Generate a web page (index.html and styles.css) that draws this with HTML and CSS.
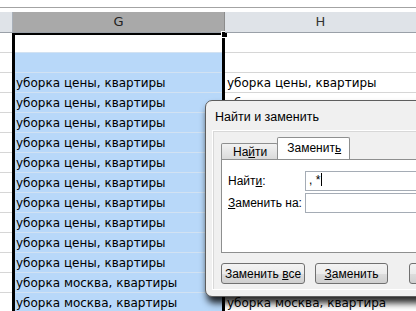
FILE: index.html
```html
<!DOCTYPE html>
<html lang="ru">
<head>
    <meta charset="UTF-8">
    <title>Найти и заменить</title>
    <link rel="stylesheet" href="styles.css">
</head>
<body>

<div class="toolbar"></div>

<div class="sheet">
    <!-- column F, only a sliver is visible -->
    <div class="col col-f">
        <div class="hdr"></div>
        <div class="cell"></div><div class="cell"></div><div class="cell"></div><div class="cell"></div>
        <div class="cell"></div><div class="cell"></div><div class="cell"></div><div class="cell"></div>
        <div class="cell"></div><div class="cell"></div><div class="cell"></div><div class="cell"></div>
        <div class="cell"></div><div class="cell"></div>
    </div>

    <!-- column G, selected -->
    <div class="col col-g">
        <div class="hdr">G</div>
        <div class="sel">
            <div class="cell active"></div>
            <div class="cell"></div>
            <div class="cell">уборка цены, квартиры</div>
            <div class="cell">уборка цены, квартиры</div>
            <div class="cell">уборка цены, квартиры</div>
            <div class="cell">уборка цены, квартиры</div>
            <div class="cell">уборка цены, квартиры</div>
            <div class="cell">уборка цены, квартиры</div>
            <div class="cell">уборка цены, квартиры</div>
            <div class="cell">уборка цены, квартиры</div>
            <div class="cell">уборка цены, квартиры</div>
            <div class="cell">уборка цены, квартиры</div>
            <div class="cell">уборка москва, квартиры</div>
            <div class="cell">уборка москва, квартиры</div>
        </div>
        <div class="handle"></div>
    </div>

    <!-- column H (rows under the dialog left blank) -->
    <div class="col col-h">
        <div class="hdr">H</div>
        <div class="cell"></div>
        <div class="cell"></div>
        <div class="cell">уборка цены, квартиры</div>
        <div class="cell">уборка цены, квартиры</div>
        <div class="cell"></div>
        <div class="cell"></div>
        <div class="cell"></div>
        <div class="cell"></div>
        <div class="cell"></div>
        <div class="cell"></div>
        <div class="cell"></div>
        <div class="cell"></div>
        <div class="cell"></div>
        <div class="cell">уборка москва, квартира</div>
    </div>
</div>

<!-- Find & replace dialog -->
<div class="dialog">
    <div class="title">Найти и заменить</div>
    <div class="client">
        <div class="tabs">
            <div class="tab">На<u>й</u>ти</div>
            <div class="tab current">Заменит<u>ь</u></div>
        </div>
        <div class="page">
            <div class="field">
                <label>Найт<u>и</u>:</label>
                <div class="input">, *<span class="caret"></span></div>
            </div>
            <div class="field">
                <label><u>З</u>аменить на:</label>
                <div class="input"></div>
            </div>
        </div>
        <div class="buttons">
            <button class="btn wide">Заменить <u>в</u>се</button>
            <button class="btn"><u>З</u>аменить</button>
            <button class="btn">Найти все</button>
        </div>
    </div>
</div>

</body>
</html>
```

FILE: styles.css
```css
body {
    margin: 0;
    width: 416px;
    height: 311px;
    overflow: hidden;
    position: relative;
    background: #fff;
    font-family: "DejaVu Sans", Verdana, sans-serif;
}
.toolbar {
    height: 12px;
    box-sizing: border-box;
    border-top: 7px solid #fff;
    border-bottom: 4px solid #fff;
    background: #a3a3a3;
}
.sheet {
    display: flex;
}
.col {
    position: relative;
}
.col-f {
    width: 13px;
}
.col-g {
    width: 212px;
}
.col-h {
    flex: 1;
}
.hdr {
    height: 21px;
    box-sizing: border-box;
    border-bottom: 1px solid #9aa0a8;
    background: #dfe3e8;
    color: #333;
    font-size: 13px;
    line-height: 20px;
    text-align: center;
}
.col-f .hdr {
    border-right: 1px solid #a9b0b9;
}
.col-g .hdr {
    background: #a9a9a9;
    border-right: 1px solid #8c8c8c;
    color: #222;
}
.cell {
    height: 20px;
    box-sizing: border-box;
    border-bottom: 1px solid #d6d6d6;
    font-size: 12px;
    line-height: 21px;
    padding-left: 2px;
    white-space: nowrap;
    overflow: hidden;
    color: #000;
}
.sel {
    border: 3px solid #000;
    border-top-width: 2px;
    border-bottom: none;
    margin-left: -1px;
    background: #b8d8f9;
}
.sel .cell {
    border-bottom-color: #d2e2f2;
    padding-left: 1px;
}
.sel .cell.active {
    height: 18px;
    background: #fff;
}
.handle {
    position: absolute;
    left: 208px;
    top: 19px;
    width: 5px;
    height: 5px;
    background: #000;
    border: 1px solid #fff;
}

/* dialog */
.dialog {
    position: absolute;
    left: 205px;
    top: 100px;
    width: 240px;
    height: 197px;
    box-sizing: border-box;
    border: 1px solid #5e5e5e;
    border-radius: 7px;
    background: #f0f0f0;
    box-shadow: 2px 6px 7px rgba(0,0,0,0.85);
    padding: 0 0 6px 6px;
    display: flex;
    flex-direction: column;
    font-family: "Liberation Sans", Arial, sans-serif;
    font-size: 12px;
    color: #000;
}
.title {
    height: 29px;
    line-height: 32px;
    padding-left: 3px;
    font-size: 12.5px;
    white-space: nowrap;
}
.client {
    flex: 1;
    border: 1px solid #fff;
    border-right: none;
    box-shadow: inset 1px 1px 0 #d8d8d8;
    padding: 7px 0 0 8px;
}
.tabs {
    display: flex;
    align-items: flex-end;
    height: 21px;
    position: relative;
    z-index: 1;
}
.tab {
    height: 16px;
    box-sizing: border-box;
    padding: 0 10px 0 11px;
    border: 1px solid #8e8f8f;
    border-bottom: none;
    border-radius: 2px 2px 0 0;
    background: linear-gradient(#f2f2f2, #dadada);
    line-height: 16px;
    margin-right: -1px;
    white-space: nowrap;
}
.tab.current {
    height: 22px;
    background: #fff;
    line-height: 20px;
    padding: 0 8px 0 9px;
}
.page {
    height: 94px;
    box-sizing: border-box;
    border: 1px solid #8e8f8f;
    border-right: none;
    background: #fff;
    padding: 10px 0 0 6px;
}
.field {
    display: flex;
    align-items: center;
    height: 21px;
    margin-bottom: 1px;
}
.field label {
    width: 77px;
    flex: none;
    white-space: nowrap;
}
.input {
    flex: 1;
    height: 20px;
    box-sizing: border-box;
    border: 1px solid #a5acb5;
    border-right: none;
    background: #fff;
    line-height: 17px;
    padding-left: 3px;
    white-space: nowrap;
}
.caret {
    display: inline-block;
    width: 1px;
    height: 13px;
    background: #000;
    vertical-align: -2px;
    margin-left: 1px;
}
.buttons {
    display: flex;
    margin-top: 10px;
}
.btn {
    height: 21px;
    padding: 0;
    width: 73px;
    margin-right: 11px;
    flex: none;
    border: 1px solid #707070;
    border-radius: 3px;
    background: linear-gradient(#f3f3f3 0%, #ebebeb 50%, #dddddd 51%, #cfcfcf 100%);
    font-family: inherit;
    font-size: 12px;
    color: #000;
    text-align: center;
    white-space: nowrap;
    overflow: hidden;
}
.btn.wide {
    width: 84px;
    margin-right: 10px;
}
.btn:last-child {
    margin-left: 10px;
}
```
